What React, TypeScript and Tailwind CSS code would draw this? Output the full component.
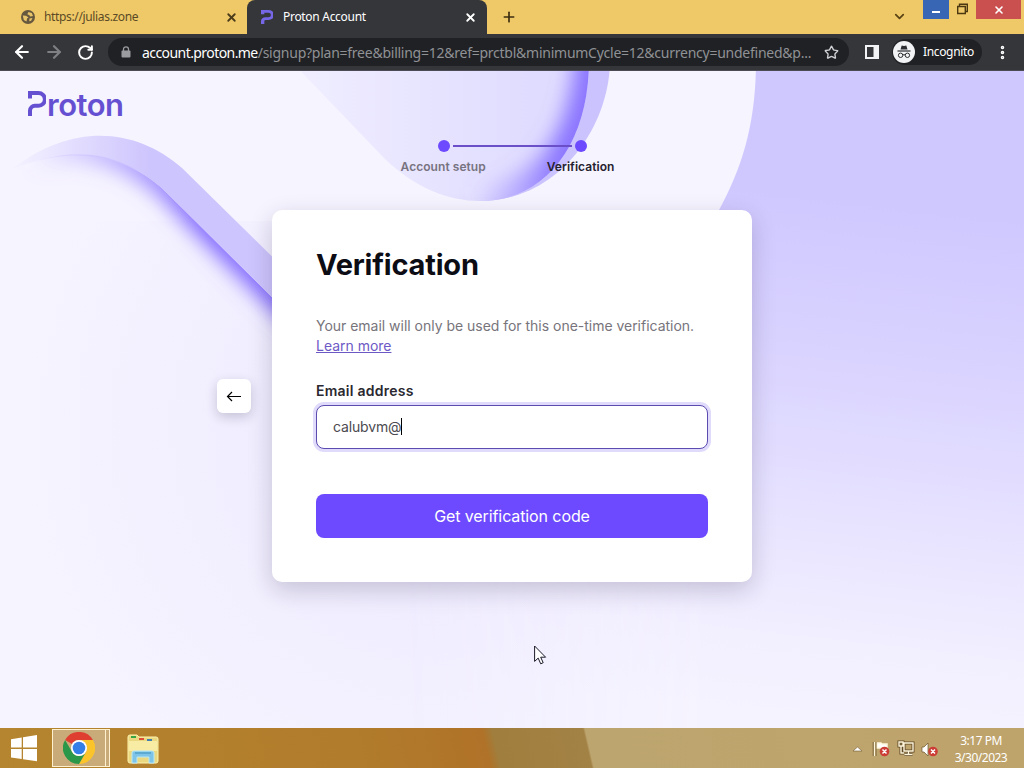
import { ArrowLeft, ArrowRight, ChevronDown, MoreVertical, Plus, RotateCw, Star, X } from "lucide-react";

const UI_FONT = "font-['Noto_Sans',sans-serif]";

function GlobeIcon() {
  return (
    <svg width="14" height="14" viewBox="0 0 14 14" className="shrink-0">
      <circle cx="7" cy="7" r="7" fill="#66583f" />
      <path d="M1.800 5.500 5 5.800l2.500 1.700L6 8.500l-.5 3L2.800 10ZM7.500 2l3.300 1 1.200 3-2.800.4L8.200 5 6.300 4.300ZM8.500 8.600l3-.6-1.400 2.800-1.800.5Z" fill="#e9c56a" />
    </svg>
  );
}

function ProtonMark({ className, weight = 4 }: { className: string; weight?: number }) {
  const inset = weight / 2;
  return (
    <svg viewBox="0 0 18 25" className={className} preserveAspectRatio="none">
      <path
        d={`M${inset} 7.500V${inset}h8.500a6.200 6.200 0 0 1 0 12.800H7A4.800 4.800 0 0 0 ${inset} 19.500V25`}
        fill="none"
        stroke="currentColor"
        strokeWidth={weight}
      />
    </svg>
  );
}

function TabStrip() {
  return (
    <div className="flex h-[34px] bg-[#efc967]">
      <div className="flex w-[247px] items-center pl-[21px] pr-[9px]">
        <GlobeIcon />
        <span className="ml-[9px] flex-1 text-[12px] tracking-[-0.35px] text-[#5b4a26]">https://julias.zone</span>
        <X size={13} strokeWidth={3.4} className="text-[#4b3c1c]" />
      </div>
      <div className="flex w-[240px] items-center rounded-t-lg bg-[#35363a] pl-[14px] pr-[10px]">
        <ProtonMark weight={5} className="h-[14px] w-[12px] text-[#7567e6]" />
        <span className="ml-[10px] flex-1 text-[12px] tracking-[-0.3px] text-white">Proton Account</span>
        <X size={13} strokeWidth={3.4} className="text-white" />
      </div>
      <div className="flex flex-1 items-center pl-[14px]">
        <Plus size={16} strokeWidth={2.5} className="text-[#3b2d10]" />
      </div>
      <div className="flex items-start">
        <ChevronDown size={15} strokeWidth={2.8} className="mr-4 mt-[9px] text-[#5a4415]" />
        <div className="flex h-[19px] w-[26px] justify-center bg-[#3866b5] pt-[11px]">
          <div className="h-[2px] w-2 bg-white" />
        </div>
        <svg width="27" height="19" viewBox="0 0 27 19" fill="none" stroke="#4b3712" strokeWidth="1.400">
          <path d="M8.700 6.500h7.600v7h-7.600zM10.500 6.500V4.200h7.800v7.300h-2" />
        </svg>
        <div className="mr-[3px] flex h-[19px] w-[45px] items-center justify-center bg-[#c9504f]">
          <X size={12} strokeWidth={3.2} className="text-white" />
        </div>
      </div>
    </div>
  );
}

function IncognitoIcon() {
  return (
    <svg width="22" height="22" viewBox="0 0 22 22" className="shrink-0">
      <circle cx="11" cy="11" r="11" fill="#f1f3f4" />
      <path d="M7.500 8.500 8.700 4.400 11 5l2.300-.6 1.200 4.100z" fill="#2c2d30" />
      <path d="M4.500 10h13" stroke="#2c2d30" strokeWidth="1.200" />
      <g fill="none" stroke="#2c2d30">
        <circle cx="7.600" cy="14.300" r="2.200" />
        <circle cx="14.400" cy="14.300" r="2.200" />
        <path d="M9.800 14q1.200-.7 2.400 0" />
      </g>
    </svg>
  );
}

function Toolbar() {
  return (
    <div className="flex h-[37px] items-center border-b border-[#4b4a55] bg-[#35363a] text-white">
      <ArrowLeft size={20} strokeWidth={2.6} className="ml-[12px]" />
      <ArrowRight size={20} strokeWidth={2.6} className="ml-[12px] text-[#7f8084]" />
      <RotateCw size={17} strokeWidth={2.8} className="ml-[13px]" />
      <div className="ml-[14px] flex h-[28px] w-[741px] items-center rounded-full bg-[#202124] pl-[13px] pr-[10px]">
        <svg width="10" height="12" viewBox="0 0 10 12" className="shrink-0">
          <rect x="0.500" y="4.500" width="9" height="7" rx="1" fill="#9b9ca0" />
          <path d="M2.500 5V3.300a2.500 2.500 0 0 1 5 0V5" fill="none" stroke="#9b9ca0" strokeWidth="1.300" />
        </svg>
        <span className="ml-[11px] flex-1 whitespace-nowrap text-[14px] tracking-[-0.25px] text-[#8f9195]">
          <span className="tracking-[-0.57px] text-white">account.proton.me</span>
          /signup?plan=free&amp;billing=12&amp;ref=prctbl&amp;minimumCycle=12&amp;currency=undefined&amp;p...
        </span>
        <Star size={15} strokeWidth={2.2} className="shrink-0 text-[#d0d1d4]" />
      </div>
      <svg width="14" height="14" viewBox="0 0 14 14" className="ml-[16px]">
        <path d="M0 0h14v14H0zM2 2v10h6.500V2z" fill="#f1f3f4" fillRule="evenodd" />
      </svg>
      <div className="ml-[13px] flex h-[26px] w-[90px] items-center rounded-full bg-[#202124] pl-px">
        <IncognitoIcon />
        <span className="ml-[8px] text-[12px] tracking-[-0.35px]">Incognito</span>
      </div>
      <MoreVertical size={17} strokeWidth={3} className="ml-[12px]" />
    </div>
  );
}

function Backdrop() {
  return (
    <svg className="absolute inset-0" width="1024" height="657" viewBox="0 71 1024 657">
      <defs>
        <radialGradient id="haze" gradientUnits="userSpaceOnUse" cx="440" cy="430" r="420">
          <stop offset="0" stopColor="#ece8ff" />
          <stop offset="1" stopColor="#f6f4ff" />
        </radialGradient>
        <linearGradient id="right" gradientUnits="userSpaceOnUse" x1="860" y1="200" x2="800" y2="720">
          <stop offset="0" stopColor="#cfc8ff" />
          <stop offset="0.300" stopColor="#d9d3ff" />
          <stop offset="0.650" stopColor="#e9e5ff" />
          <stop offset="0.850" stopColor="#f2efff" />
          <stop offset="1" stopColor="#f5f3ff" />
        </linearGradient>
        <linearGradient id="edge" gradientUnits="userSpaceOnUse" x1="400" y1="0" x2="710" y2="0">
          <stop offset="0" stopColor="#000" />
          <stop offset="1" stopColor="#fff" />
        </linearGradient>
        <mask id="fade" maskUnits="userSpaceOnUse" x="0" y="0" width="1024" height="768">
          <rect width="1024" height="768" fill="url(#edge)" />
        </mask>
        <linearGradient id="ribbon" gradientUnits="userSpaceOnUse" x1="15" y1="0" x2="150" y2="0">
          <stop offset="0" stopColor="#cdc4ff" stopOpacity="0.050" />
          <stop offset="1" stopColor="#cdc5fd" />
        </linearGradient>
        <linearGradient id="shade" gradientUnits="userSpaceOnUse" x1="30" y1="0" x2="200" y2="0">
          <stop offset="0" stopColor="#8a74ff" stopOpacity="0" />
          <stop offset="1" stopColor="#826bff" />
        </linearGradient>
        <linearGradient id="blob" gradientUnits="userSpaceOnUse" x1="310" y1="0" x2="530" y2="0">
          <stop offset="0" stopColor="#efedff" />
          <stop offset="1" stopColor="#e0dcff" />
        </linearGradient>
        <linearGradient id="rim" gradientUnits="userSpaceOnUse" x1="475" y1="0" x2="560" y2="0">
          <stop offset="0" stopColor="#8e7aff" stopOpacity="0" />
          <stop offset="1" stopColor="#8a75ff" />
        </linearGradient>
        <clipPath id="below">
          <path d="M0 176C70 140 120 152 162 188L300 325V500H0Z" />
        </clipPath>
        <clipPath id="drop">
          <path d="M290 60 384 158C415 188 448 201 480 201C545 201 589 145 589 60Z" />
        </clipPath>
        <filter id="soft" filterUnits="userSpaceOnUse" x="-40" y="0" width="700" height="400">
          <feGaussianBlur stdDeviation="10" />
        </filter>
      </defs>
      <rect y="71" width="1024" height="657" fill="url(#haze)" />
      <rect y="71" width="1024" height="150" fill="#f6f4ff" />
      <path d="M756 60C756 120 744 165 718 212L300 500V728H1024V60Z" fill="url(#right)" mask="url(#fade)" />
      <path d="M540 60H610C610 125 560 201 480 201Z" fill="#cbc3fd" />
      <path d="M290 60 384 158C415 188 448 201 480 201C545 201 589 145 589 60Z" fill="url(#blob)" />
      <g clipPath="url(#drop)">
        <path d="M596 30C596 152 545 206 460 210" fill="none" stroke="url(#rim)" strokeWidth="40" filter="url(#soft)" />
      </g>
      <g clipPath="url(#below)">
        <path d="M0 170C70 134 120 147 166 184L330 348" fill="none" stroke="url(#shade)" strokeWidth="29" filter="url(#soft)" />
      </g>
      <path d="M12 169C75 121 137 129 182 168L300 284V325L162 188C120 152 70 146 12 169Z" fill="url(#ribbon)" />
    </svg>
  );
}

function Stepper() {
  return (
    <div className="flex flex-col items-center pt-[69px]">
      <div className="flex items-center gap-[3px]">
        <div className="size-3 rounded-full bg-[#6d4aff]" />
        <div className="h-[2px] w-[119px] bg-[#6b4fc8]" />
        <div className="size-3 rounded-full bg-[#6d4aff]" />
      </div>
      <div className="mr-[9px] mt-[6px] flex gap-[61px] text-[12px] font-semibold leading-[18px] tracking-[0.05px]">
        <span className="text-[#77737f]">Account setup</span>
        <span className="text-[#25212e]">Verification</span>
      </div>
    </div>
  );
}

function VerificationCard() {
  return (
    <div className="h-[372px] w-[480px] rounded-[10px] bg-white px-[44px] pt-[36px] shadow-[0_8px_24px_rgba(30,20,50,0.2)]">
      <h1 className="text-[29px] font-bold leading-[38px] tracking-[-0.2px] text-[#0c0c14]">Verification</h1>
      <p className="mt-[32px] whitespace-nowrap text-[14px] leading-5 tracking-[-0.02px] text-[#77747b]">
        Your email will only be used for this one-time verification.
        <br />
        <a className="text-[#6d59c5] underline">Learn more</a>
      </p>
      <label className="mt-[25px] block text-[14px] font-semibold leading-5 tracking-[0.25px] text-[#2a2830]">Email address</label>
      <div className="mt-[4px] flex h-[44px] items-center rounded-lg border border-[#5c4bb0] bg-white pb-px pl-4 text-[14px] tracking-[-0.15px] text-[#4c4a50] shadow-[0_0_0_3px_#e0dafb]">
        calubvm@
        <span className="h-[17px] w-px bg-black" />
      </div>
      <button className="mt-[45px] h-[44px] w-full rounded-lg bg-[#6d4aff] text-[16px] tracking-[-0.1px] text-white">Get verification code</button>
    </div>
  );
}

function SignupPage() {
  return (
    <main className="relative h-[657px] overflow-hidden bg-[#f5f3ff] font-[Inter,sans-serif]">
      <Backdrop />
      <div className="absolute left-[28px] top-[20px] flex text-[#6650d2]" aria-label="Proton">
        <ProtonMark className="h-[25px] w-[18px]" />
        <span className="ml-px text-[31px] font-semibold leading-[27px] tracking-[-0.5px]">roton</span>
      </div>
      <div className="relative">
        <Stepper />
        <div className="mt-[34px] flex items-center">
          <button className="ml-[217px] mr-[21px] flex size-[34px] items-center justify-center rounded-md bg-white text-black shadow-[0_4px_12px_rgba(30,20,50,0.2)]">
            <svg width="16" height="12" viewBox="0 0 16 12" fill="none" stroke="currentColor" strokeWidth="1.200">
              <path d="M15 6.500H1.500M6 2 1.500 6.500 6 11" />
            </svg>
          </button>
          <VerificationCard />
        </div>
      </div>
      <svg className="absolute left-[534px] top-[574px]" width="13" height="20" viewBox="0 0 13 20">
        <path d="M.6 1v15.400l3.600-3.300 2.500 5.700 2.500-1.100-2.500-5.500h4.900z" fill="#fff" stroke="#1a1a28" />
      </svg>
    </main>
  );
}

function ChromeIcon() {
  return (
    <svg width="32" height="32" viewBox="0 0 32 32">
      <path d="M2.100 8A16 16 0 0 1 29.900 8H16a8 8 0 0 0-7 4z" fill="#de3f31" />
      <path d="M29.900 8A16 16 0 0 1 16 32l7-12a8 8 0 0 0-7-12z" fill="#fcc42b" />
      <path d="M16 32A16 16 0 0 1 2.100 8l7 12a8 8 0 0 0 13.800 0z" fill="#2a9848" />
      <circle cx="16" cy="16" r="8" fill="#fff" />
      <circle cx="16" cy="16" r="6.300" fill="#347fe7" />
    </svg>
  );
}

function FolderIcon() {
  return (
    <svg width="32" height="30" viewBox="0 0 32 30">
      <path d="M1 3q0-2 2-2h7l2 2h17q2 0 2 2v22q0 2-2 2H3q-2 0-2-2z" fill="#ead980" stroke="#fff2ae" />
      <path d="M4 2h5v2H4z" fill="#37a544" />
      <path d="M12 4h5v2h-5z" fill="#dc4d3a" />
      <path d="M20 5h5v2h-5z" fill="#407fb0" />
      <path d="M2 7h28v10H2z" fill="#f8eca4" />
      <path d="M5 29V19q0-2 2-2h18q2 0 2 2v10h-5v-6H10v6z" fill="#7dc4e8" stroke="#b9e8f7" />
      <path d="M8 19h16" stroke="#3d8ebc" />
    </svg>
  );
}

function Taskbar() {
  return (
    <div className="flex h-10 items-center bg-[linear-gradient(77deg,#b5852f_0%,#b17c2c_35%,#b07228_47.500%,#a07e3d_48.500%,#a38246_57.300%,#bda56f_57.500%,#bea36b_100%)]">
      <svg width="28" height="28" viewBox="0 0 28 28" className="ml-[10px]">
        <path d="M1 5.200 11.700 3.500v10H1zM13 3.300 27 1v12.500H13zM1 15h10.700v10L1 23.500zM13 15h14v12.300L13 25.200z" fill="#fff" />
      </svg>
      <div className="ml-[14px] flex h-[38px] w-[58px] border border-[#fff0cf] bg-[#c9ab7a]">
        <div className="flex w-[53px] items-center justify-center border-r border-[#fff0cf]">
          <ChromeIcon />
        </div>
      </div>
      <div className="ml-[17px] mt-0.5">
        <FolderIcon />
      </div>
      <svg width="86" height="20" viewBox="0 0 86 20" className="ml-auto mr-[16px] mt-0.5" fill="none">
        <path d="M1 12 5.500 8l4.500 4z" fill="#fff" stroke="#705a34" strokeWidth=".6" />
        <path d="M22.500 3v14M25 4h4l1 1h5v5h-5l-1-1h-4z" fill="#fff" stroke="#fff6dc" strokeWidth="1.500" />
        <path d="M24 3v14M21.200 3v14" stroke="#6b542d" strokeWidth=".8" />
        <path d="M52 4h9v8h-9zM56.500 12v3m-4 0.500h8M47 3h4v4h-4zM49 7v7h3" stroke="#5e4927" strokeWidth="3" />
        <path d="M52 4h9v8h-9zM56.500 12v3m-4 0.500h8M47 3h4v4h-4zM49 7v7h3" stroke="#fff6dc" strokeWidth="1.400" />
        <path d="M70 8h2l4-4v13l-4-4h-2z" fill="#fff" stroke="#6b542d" strokeWidth=".7" />
        <circle cx="32.500" cy="12.500" r="4.800" fill="#cb3d35" />
        <circle cx="81" cy="12.500" r="4.800" fill="#cb3d35" />
        <path d="m30.500 10.500 4 4m0-4-4 4M79 10.500l4 4m0-4-4 4" stroke="#fff" strokeWidth="1.500" />
      </svg>
      <div className="mr-[16px] mt-[2px] w-[54px] whitespace-nowrap text-center text-[12px] leading-[17px] tracking-[-0.500px] text-white">
        <div>3:17 PM</div>
        <div>3/30/2023</div>
      </div>
    </div>
  );
}

export default function App() {
  return (
    <div className={`h-[768px] w-[1024px] overflow-hidden ${UI_FONT}`}>
      <TabStrip />
      <Toolbar />
      <SignupPage />
      <Taskbar />
    </div>
  );
}
